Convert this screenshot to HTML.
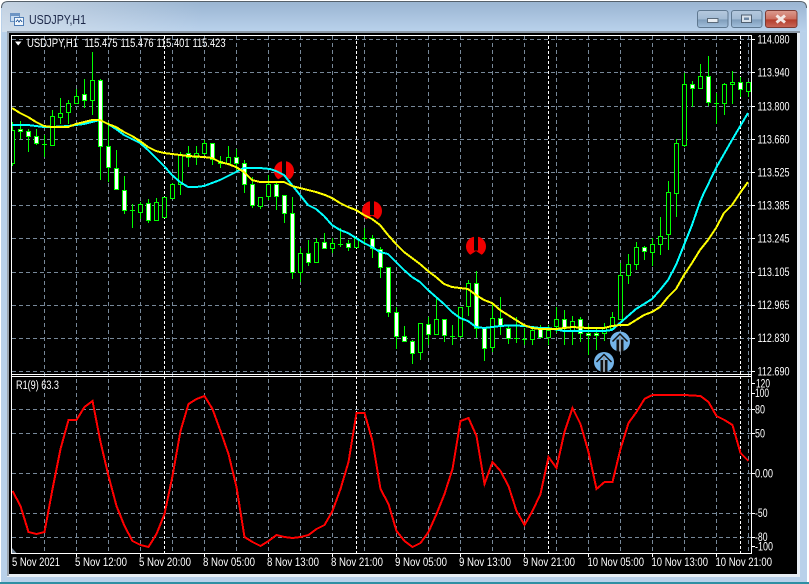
<!DOCTYPE html>
<html><head><meta charset="utf-8"><title>USDJPY,H1</title>
<style>
html,body{margin:0;padding:0;background:#fff;width:809px;height:584px;overflow:hidden}
svg{display:block}
text{font-family:"Liberation Sans",sans-serif;font-size:11.5px;fill:#fff}
.c{shape-rendering:crispEdges}
</style></head><body>
<svg width="809" height="584" viewBox="0 0 809 584" xmlns="http://www.w3.org/2000/svg">
<defs>
<linearGradient id="t" x1="0" y1="0" x2="0" y2="1"><stop offset="0" stop-color="#9ab5d2"/><stop offset="1" stop-color="#bad2ec"/></linearGradient>
<linearGradient id="l" x1="0" y1="0" x2="1" y2="0"><stop offset="0" stop-color="#e4e8ec" stop-opacity=".55"/><stop offset=".25" stop-color="#e4e8ec" stop-opacity="0"/></linearGradient>
<linearGradient id="b" x1="0" y1="0" x2="0" y2="1"><stop offset="0" stop-color="#b5c9de"/><stop offset=".5" stop-color="#a3bbd4"/><stop offset=".55" stop-color="#7f9dbb"/><stop offset="1" stop-color="#a3c0dc"/></linearGradient>
<linearGradient id="r" x1="0" y1="0" x2="0" y2="1"><stop offset="0" stop-color="#dc9c90"/><stop offset=".5" stop-color="#cc6f60"/><stop offset=".55" stop-color="#b33d2c"/><stop offset="1" stop-color="#c9685a"/></linearGradient>
</defs>
<rect x="0" y="0" width="809" height="584" fill="#fff"/>
<path d="M1 584V8Q1 1.500 8 1.500H800Q807 1.500 807 8V584Z" fill="#b9d1ea"/>
<path d="M2 8Q2 2 8 2H800Q806 2 806 8V32H2Z" fill="url(#t)"/>
<path d="M2 8Q2 2 8 2H800Q806 2 806 8V32H2Z" fill="url(#l)"/>
<path d="M1.500 8Q1.500 1.500 8 1.500H800Q806.500 1.500 806.500 8" fill="none" stroke="#55606a"/>
<rect x="0" y="582" width="809" height="2" fill="#2f8fa3"/>
<rect x="7" y="31" width="793" height="546" fill="#e8eef4"/>
<rect x="7" y="31" width="793" height="2" fill="#8b98a6"/>
<rect x="7" y="33" width="2" height="543" fill="#9aa5b0"/>
<rect x="9" y="33" width="788" height="541" fill="#000"/>

<!-- title icon -->
<g class="c">
<rect x="10.500" y="13.500" width="9" height="8" fill="#c9ddf2" stroke="#6d95c4"/>
<rect x="14.500" y="17.500" width="9" height="8" fill="#eef5fc" stroke="#4f7db5"/>
<rect x="11" y="14" width="8" height="2" fill="#6d95c4"/>
<path d="M16 22l1.500 -2 1.500 2 1.500 -2 1.500 2" fill="none" stroke="#3a6aa6"/>
</g>
<text x="29" y="24" textLength="57" lengthAdjust="spacingAndGlyphs" style="font-size:12.5px;fill:#1c2748">USDJPY,H1</text>

<!-- buttons -->
<rect x="697.500" y="10.500" width="30.500" height="17" rx="2.500" fill="url(#b)" stroke="#5f7890"/>
<rect x="731.500" y="10.500" width="30.500" height="17" rx="2.500" fill="url(#b)" stroke="#5f7890"/>
<rect x="765.500" y="10.500" width="31.500" height="17" rx="2.500" fill="url(#r)" stroke="#7c3a33"/>
<rect x="707.500" y="18.500" width="10.500" height="4" fill="#e8edf2" stroke="#5a6a7a"/>
<rect x="741.500" y="15" width="10" height="7.500" fill="#d9e2eb" stroke="#4f5f70"/>
<rect x="744" y="17.500" width="5" height="2.500" fill="#6d87a3"/>
<path d="M776.500 15.500L785 22.500M785 15.500L776.500 22.500" stroke="#f3e7e4" stroke-width="3" fill="none"/>

<!-- grid -->
<g class="c" fill="none" stroke="#778899" stroke-dasharray="4 3">
<path d="M12 39.500H751M12 72.500H751M12 106.500H751M12 139.500H751M12 172.500H751M12 205.500H751M12 238.500H751M12 272.500H751M12 305.500H751M12 338.500H751M12 371.500H751M12 409.500H751M12 433.500H751M12 473.500H751M12 513.500H751M12 537.500H751"/>
<path d="M44.500 36V553M76.500 36V553M108.500 36V553M140.500 36V553M172.500 36V553M204.500 36V553M236.500 36V553M268.500 36V553M300.500 36V553M332.500 36V553M364.500 36V553M396.500 36V553M428.500 36V553M460.500 36V553M492.500 36V553M524.500 36V553M556.500 36V553M588.500 36V553M620.500 36V553M652.500 36V553M684.500 36V553M716.500 36V553M748.500 36V553"/>
</g>
<path class="c" d="M164.500 36V553M356.500 36V553M548.500 36V553M740.500 36V553" stroke="#fff" stroke-dasharray="3 2" fill="none"/>

<!-- frames -->
<path class="c" d="M11.500 35V554M11 35.500H752M751.500 35V554M11 374.500H752M11 376.500H752M11 553.500H752" stroke="#fff" fill="none"/>
<path class="c" d="M752 39.500h3M752 72.500h3M752 106.500h3M752 139.500h3M752 172.500h3M752 205.500h3M752 238.500h3M752 272.500h3M752 305.500h3M752 338.500h3M752 371.500h3M752 383.500h3M752 393.500h3M752 409.500h3M752 433.500h3M752 473.500h3M752 513.500h3M752 537.500h3M752 546.500h3M76.500 554v3M140.500 554v3M204.500 554v3M268.500 554v3M332.500 554v3M396.500 554v3M460.500 554v3M524.500 554v3M588.500 554v3M652.500 554v3M716.500 554v3" stroke="#fff" fill="none"/>
<path d="M12 548L16.500 553H12Z" fill="#778899"/>

<!-- candle wicks -->
<path class="c" fill="none" stroke="#00ff00" d="M12.500 122V166M20.500 121V139M28.500 129V152M36.500 129V145M44.500 135V157M52.500 110V145M60.500 98V124M68.500 100V124M76.500 89V103M84.500 79V108M92.500 52V115M100.500 79V180M108.500 122V182M116.500 150V190M124.500 176V214M132.500 204V228M140.500 202V219M148.500 199V223M156.500 198V221M164.500 197V217M172.500 183V198M180.500 152V195M188.500 146V167M196.500 146V165M204.500 140V155M212.500 143V165M220.500 156V168M228.500 146V165M236.500 149V170M244.500 160V193M252.500 177V208M260.500 197V209M268.500 175V200M276.500 182V210M284.500 195V223M292.500 197V279M300.500 248V282M308.500 240V266M316.500 238V262M324.500 233V249M332.500 238V253M340.500 228V247M348.500 240V251M356.500 238V247M364.500 228V245M372.500 235V258M380.500 247V278M388.500 267V317M396.500 307V349M404.500 326V342M412.500 340V364M420.500 323V360M428.500 317V345M436.500 297V335M444.500 319V342M452.500 325V345M460.500 307V338M468.500 280V316M476.500 271V338M484.500 328V361M492.500 302V352M500.500 297V335M508.500 325V344M516.500 317V343M524.500 328V345M532.500 328V345M540.500 325V337M548.500 325V345M556.500 307V333M564.500 310V345M572.500 316V345M580.500 317V342M588.500 325V355M596.500 327V350M604.500 323V341M612.500 312V330M620.500 263V319M628.500 254V284M636.500 242V270M644.500 246V260M652.500 238V266M660.500 217V255M668.500 181V250M676.500 139V217M684.500 73V147M692.500 81V107M700.500 64V88M708.500 56V106M716.500 93V124M724.500 83V115M732.500 71V104M740.500 77V97M748.500 82V97M42 144.500h5M130 210.500h5M338 244.500h5M362 238.500h5M450 336.500h5M514 338.500h5M522 339.500h5M714 103.500h5"/>
<!-- hollow bodies -->
<path class="c" fill="#000" stroke="#00ff00" d="M12 130.500H14.500V163.500H12M50.500 116.500h4V145.500h-4zM58.500 113.500h4V117.500h-4zM66.500 103.500h4V112.500h-4zM74.500 96.500h4V103.500h-4zM90.500 80.500h4V100.500h-4zM138.500 204.500h4V212.500h-4zM154.500 202.500h4V220.500h-4zM162.500 197.500h4V217.500h-4zM170.500 184.500h4V198.500h-4zM178.500 154.500h4V184.500h-4zM194.500 153.500h4V157.500h-4zM202.500 143.500h4V153.500h-4zM226.500 157.500h4V163.500h-4zM258.500 197.500h4V206.500h-4zM266.500 184.500h4V196.500h-4zM298.500 253.500h4V272.500h-4zM314.500 242.500h4V262.500h-4zM330.500 243.500h4V248.500h-4zM354.500 238.500h4V247.500h-4zM418.500 323.500h4V352.500h-4zM434.500 319.500h4V334.500h-4zM458.500 307.500h4V336.500h-4zM466.500 283.500h4V306.500h-4zM490.500 318.500h4V347.500h-4zM530.500 330.500h4V339.500h-4zM546.500 330.500h4V337.500h-4zM554.500 319.500h4V326.500h-4zM570.500 321.500h4V330.500h-4zM602.500 327.500h4V333.500h-4zM610.500 317.500h4V328.500h-4zM618.500 275.500h4V319.500h-4zM626.500 264.500h4V275.500h-4zM634.500 247.500h4V264.500h-4zM650.500 244.500h4V252.500h-4zM658.500 236.500h4V244.500h-4zM666.500 192.500h4V234.500h-4zM674.500 143.500h4V193.500h-4zM682.500 84.500h4V145.500h-4zM698.500 76.500h4V88.500h-4zM722.500 84.500h4V103.500h-4zM730.500 82.500h4V84.500h-4zM746.500 82.500h4V91.500h-4z"/>
<!-- white bodies -->
<path class="c" fill="#fff" stroke="#00ff00" d="M18.500 129.500h4V131.500h-4zM26.500 131.500h4V136.500h-4zM34.500 136.500h4V143.500h-4zM82.500 94.500h4V100.500h-4zM98.500 80.500h4V146.500h-4zM106.500 146.500h4V167.500h-4zM114.500 168.500h4V189.500h-4zM122.500 190.500h4V210.500h-4zM146.500 203.500h4V220.500h-4zM186.500 153.500h4V157.500h-4zM210.500 143.500h4V159.500h-4zM218.500 161.500h4V163.500h-4zM234.500 157.500h4V163.500h-4zM242.500 163.500h4V184.500h-4zM250.500 184.500h4V205.500h-4zM274.500 184.500h4V196.500h-4zM282.500 195.500h4V213.500h-4zM290.500 213.500h4V272.500h-4zM306.500 253.500h4V262.500h-4zM322.500 242.500h4V248.500h-4zM346.500 243.500h4V247.500h-4zM370.500 238.500h4V248.500h-4zM378.500 249.500h4V267.500h-4zM386.500 267.500h4V312.500h-4zM394.500 312.500h4V336.500h-4zM402.500 336.500h4V341.500h-4zM410.500 341.500h4V353.500h-4zM426.500 324.500h4V334.500h-4zM442.500 319.500h4V335.500h-4zM474.500 283.500h4V328.500h-4zM482.500 328.500h4V348.500h-4zM498.500 318.500h4V326.500h-4zM506.500 328.500h4V338.500h-4zM538.500 328.500h4V337.500h-4zM562.500 319.500h4V328.500h-4zM578.500 319.500h4V333.500h-4zM586.500 333.500h4V335.500h-4zM594.500 333.500h4V335.500h-4zM642.500 247.500h4V251.500h-4zM690.500 84.500h4V88.500h-4zM706.500 76.500h4V102.500h-4zM738.500 82.500h4V89.500h-4z"/>

<!-- arrows red -->
<g transform="translate(284,171)"><circle r="10" fill="#f00000"/><path d="M-2 -10.500H2V4H-2Z" fill="#000"/><path d="M-6 8.500L0 4.500L6 8.500L0 11Z" fill="#000"/></g>
<g transform="translate(372,211)"><circle r="10" fill="#f00000"/><path d="M-2 -10.500H2V4H-2Z" fill="#000"/><path d="M-6 8.500L0 4.500L6 8.500L0 11Z" fill="#000"/></g>
<g transform="translate(476,246.500)"><circle r="10" fill="#f00000"/><path d="M-2 -10.500H2V4H-2Z" fill="#000"/><path d="M-6 8.500L0 4.500L6 8.500L0 11Z" fill="#000"/></g>

<!-- moving averages -->
<polyline class="c" fill="none" stroke="#00ffff" stroke-width="2" points="12,125 28,125 44,127 52,127 68,126 84,124 100,120 108,124 116,129 124,135 132,139 140,143 148,150 156,158 164,166 172,175 180,182 188,187 196,187 204,186 212,183 220,180 228,176 236,172 244,168 252,168 260,168 270,169 276,171 284,175 292,185 300,195 308,205 316,209 324,216 332,225 340,230 348,233 356,238 364,243 372,247 380,252 388,254 396,262 404,270 412,277 420,282 428,290 436,297 444,304 452,312 460,318 468,321 476,327 484,328 492,327 500,326 508,325.500 516,325.500 524,326 532,327 540,328 548,328 564,331 580,331 604,331 612,330 620,323 636,309 652,299 660,290 668,280 676,265 684,245 692,225 700,202 703,195 716,168 732,140 748,113"/>
<polyline class="c" fill="none" stroke="#ffff00" stroke-width="2" points="12,108 20,113 28,117 36,122 44,126 52,127 68,127 76,124 84,122 92,120 100,120 108,124 116,127 124,132 132,136 140,141 148,147 156,151 164,153 172,154 180,155 188,156 204,157 212,158 220,162 228,164 236,167 244,172 252,180 260,182 284,182 292,186 300,188 308,190 316,192 325,195 332,198 340,203 348,207 356,210 364,215 372,219 380,225 388,235 396,244 404,252 412,258 420,264 428,271 436,277 444,284 452,287 460,288 468,289 476,295 484,300 492,303 500,310 508,315 516,320 524,325 532,328 540,329 556,329 564,328 572,327 588,328 604,328 612,326 620,325 628,325 636,320 644,315 652,312 660,307 668,297 676,289 684,275 692,263 700,250 708,240 716,228 724,213 732,205 740,193 748,182"/>

<!-- arrows blue -->
<g transform="translate(620,341.500)"><circle r="10" fill="#74b4e8"/><path d="M-7.500 0L0 -7.500L7.500 0" fill="none" stroke="#111" stroke-width="1.500"/><path d="M-3.500 -2H3.500V10H-3.500Z" fill="#111"/><path d="M-1 -5H1V10H-1Z" fill="#8f9ba6"/></g>
<g transform="translate(604,362)"><circle r="10" fill="#74b4e8"/><path d="M-7.500 0L0 -7.500L7.500 0" fill="none" stroke="#111" stroke-width="1.500"/><path d="M-3.500 -2H3.500V10H-3.500Z" fill="#111"/><path d="M-1 -5H1V10H-1Z" fill="#8f9ba6"/></g>

<!-- RSI -->
<polyline class="c" fill="none" stroke="#ff0000" stroke-width="2" points="12.500,491 20.500,506 28.500,532 36.500,534 44.500,532 52.500,489 60.500,449 68.500,420 76.500,420 84.500,407 92.500,401 100.500,442 108.500,476 116.500,506 124.500,526 132.500,541 140.500,545 148.500,547 156.500,534 164.500,514 172.500,476 180.500,431 188.500,404 196.500,399 204.500,396 212.500,409 220.500,431 228.500,454 236.500,487 244.500,537 252.500,542 260.500,546 268.500,541 276.500,535 284.500,537 292.500,538 300.500,537 308.500,535 316.500,529 324.500,525 332.500,511 340.500,489 348.500,462 356.500,413 364.500,413 372.500,441 380.500,489 388.500,504 396.500,531 404.500,541 412.500,547 420.500,543 428.500,532 436.500,514 444.500,494 452.500,469 460.500,421 468.500,418 476.500,436 484.500,484 492.500,462 500.500,471 508.500,486 516.500,511 524.500,525 532.500,511 540.500,494 548.500,457 556.500,468 564.500,432 572.500,408 580.500,424 588.500,452 596.500,489 604.500,482 612.500,482 620.500,449 628.500,423 636.500,412 644.500,399 652.500,395 660.500,395 684.500,395 700.500,396 708.500,402 716.500,416 724.500,420 732.500,425 740.500,453 748.500,461"/>

<!-- labels -->
<path d="M15 41.500H21.500L18.200 45.500Z" fill="#fff"/>
<text x="27" y="47" textLength="51" lengthAdjust="spacingAndGlyphs">USDJPY,H1</text>
<text x="84.500" y="47" textLength="33" lengthAdjust="spacingAndGlyphs">115.475</text>
<text x="120.500" y="47" textLength="33" lengthAdjust="spacingAndGlyphs">115.476</text>
<text x="156.500" y="47" textLength="33" lengthAdjust="spacingAndGlyphs">115.401</text>
<text x="192.500" y="47" textLength="33" lengthAdjust="spacingAndGlyphs">115.423</text>
<text x="16" y="389" textLength="43" lengthAdjust="spacingAndGlyphs">R1(9) 63.3</text>

<text x="757.500" y="43.500" textLength="32" lengthAdjust="spacingAndGlyphs">114.080</text>
<text x="757.500" y="76.500" textLength="32" lengthAdjust="spacingAndGlyphs">113.940</text>
<text x="757.500" y="110.500" textLength="32" lengthAdjust="spacingAndGlyphs">113.800</text>
<text x="757.500" y="143.500" textLength="32" lengthAdjust="spacingAndGlyphs">113.660</text>
<text x="757.500" y="176.500" textLength="32" lengthAdjust="spacingAndGlyphs">113.525</text>
<text x="757.500" y="209.500" textLength="32" lengthAdjust="spacingAndGlyphs">113.385</text>
<text x="757.500" y="242.500" textLength="32" lengthAdjust="spacingAndGlyphs">113.245</text>
<text x="757.500" y="276" textLength="32" lengthAdjust="spacingAndGlyphs">113.105</text>
<text x="757.500" y="309" textLength="32" lengthAdjust="spacingAndGlyphs">112.965</text>
<text x="757.500" y="342" textLength="32" lengthAdjust="spacingAndGlyphs">112.830</text>
<text x="757.500" y="375.500" textLength="32" lengthAdjust="spacingAndGlyphs">112.690</text>

<text x="756" y="387.500" textLength="14" lengthAdjust="spacingAndGlyphs">120</text>
<text x="755" y="397" textLength="14" lengthAdjust="spacingAndGlyphs">100</text>
<text x="755" y="413.500" textLength="10" lengthAdjust="spacingAndGlyphs">80</text>
<text x="755" y="437.500" textLength="10" lengthAdjust="spacingAndGlyphs">50</text>
<text x="755" y="477.500" textLength="18" lengthAdjust="spacingAndGlyphs">0.00</text>
<text x="755" y="517" textLength="12.500" lengthAdjust="spacingAndGlyphs">-50</text>
<text x="755" y="541" textLength="12.500" lengthAdjust="spacingAndGlyphs">-80</text>
<text x="755" y="550.500" textLength="18" lengthAdjust="spacingAndGlyphs">-100</text>

<text x="12" y="566" textLength="48" lengthAdjust="spacingAndGlyphs">5 Nov 2021</text>
<text x="75" y="566" textLength="52" lengthAdjust="spacingAndGlyphs">5 Nov 12:00</text>
<text x="139" y="566" textLength="52" lengthAdjust="spacingAndGlyphs">5 Nov 20:00</text>
<text x="203" y="566" textLength="52" lengthAdjust="spacingAndGlyphs">8 Nov 05:00</text>
<text x="267" y="566" textLength="52" lengthAdjust="spacingAndGlyphs">8 Nov 13:00</text>
<text x="331" y="566" textLength="52" lengthAdjust="spacingAndGlyphs">8 Nov 21:00</text>
<text x="395" y="566" textLength="52" lengthAdjust="spacingAndGlyphs">9 Nov 05:00</text>
<text x="459" y="566" textLength="52" lengthAdjust="spacingAndGlyphs">9 Nov 13:00</text>
<text x="523" y="566" textLength="52" lengthAdjust="spacingAndGlyphs">9 Nov 21:00</text>
<text x="587.500" y="566" textLength="56.500" lengthAdjust="spacingAndGlyphs">10 Nov 05:00</text>
<text x="651.500" y="566" textLength="56.500" lengthAdjust="spacingAndGlyphs">10 Nov 13:00</text>
<text x="715.500" y="566" textLength="56.500" lengthAdjust="spacingAndGlyphs">10 Nov 21:00</text>
</svg>
</body></html>
